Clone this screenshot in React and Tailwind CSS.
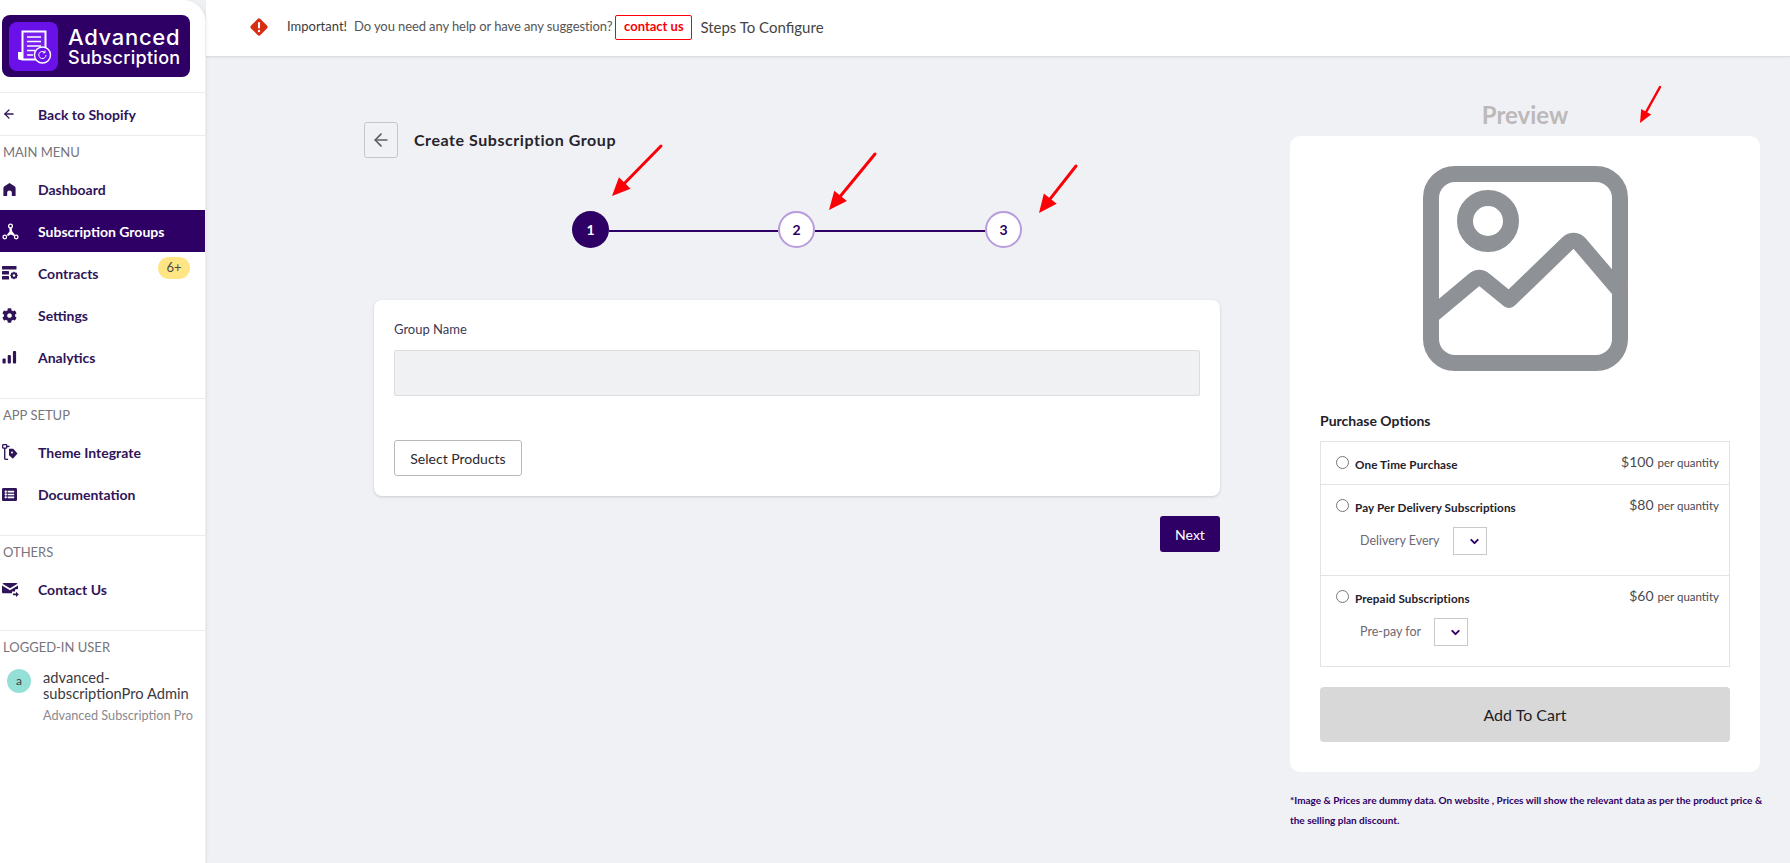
import React from 'react'
import { ArrowLeft, ChevronDown } from 'lucide-react'
import { FaCog, FaListAlt } from 'react-icons/fa'

const font = { fontFamily: 'Lato, "Open Sans", sans-serif' }

// ==================== ICONS ====================
const HomeIcon = () => (
  <svg width="15" height="15" viewBox="0 0 16 16" fill="currentColor">
    <path d="M8 1 2.600 4.600C1.900 5 1.500 5.800 1.500 6.600V15h4v-3.500a2.500 2.500 0 0 1 5 0V15h4V6.600c0-.8-.4-1.600-1.100-2z" />
  </svg>
)

const HubIcon = () => (
  <svg width="17" height="17" viewBox="0 0 17 17" fill="currentColor">
    <circle cx="8.500" cy="3" r="1.900" fill="none" stroke="currentColor" strokeWidth="1.300" />
    <circle cx="2.800" cy="14" r="1.800" fill="none" stroke="currentColor" strokeWidth="1.300" />
    <circle cx="14.200" cy="14" r="1.800" fill="none" stroke="currentColor" strokeWidth="1.300" />
    <path d="M7.500 5h2l.8 3.600 2.600 3.200-1 1.200-3-1.400-3 1.400-1-1.200 2.600-3.200z" />
  </svg>
)

const ContractsIcon = () => (
  <svg width="16" height="14" viewBox="0 0 16 14" fill="currentColor">
    <rect x="0" y="0" width="14.500" height="3.500" rx="0.600" />
    <rect x="0" y="5" width="7" height="3.500" rx="0.600" />
    <rect x="0" y="10" width="7" height="3.500" rx="0.600" />
    <circle cx="12" cy="9.500" r="2.300" fill="none" stroke="currentColor" strokeWidth="2" />
    <path d="M12 5.800v1.400M12 11.800v1.400M8.300 9.500h1.400M14.300 9.500h1.400M9.400 6.900l1 1M13.600 11.100l1 1M14.600 6.900l-1 1M10.400 11.100l-1 1" stroke="currentColor" strokeWidth="1.200" />
  </svg>
)

const AnalyticsIcon = () => (
  <svg width="15" height="13" viewBox="0 0 15 13" fill="currentColor">
    <rect x="0.500" y="7.500" width="3.200" height="5" rx="1" />
    <rect x="5.700" y="4" width="3.200" height="8.500" rx="1" />
    <rect x="10.900" y="0" width="3.200" height="12.500" rx="1" />
  </svg>
)

const ThemeIcon = () => (
  <svg width="16" height="17" viewBox="0 0 16 17" fill="currentColor">
    <rect x="0.700" y="0.700" width="4" height="3.400" rx="0.600" fill="none" stroke="currentColor" strokeWidth="1.300" />
    <path d="M2.700 4v10.200c0 .8.4 1.200 1.200 1.200h2.200" fill="none" stroke="currentColor" strokeWidth="1.400" />
    <path d="M4 2.400h3.500" fill="none" stroke="currentColor" strokeWidth="1.400" />
    <path d="M7 4.800h4.200l4.300 4.600-4.600 5.400-3.900-3.600z" />
    <circle cx="10" cy="8.400" r="1" fill="#fff" />
  </svg>
)

const MailIcon = () => (
  <svg width="17" height="15" viewBox="0 0 17 15" fill="currentColor">
    <path d="M0.500 1.800 8 6.300l7.500-4.500C15.300 1.200 14.800 1 14.200 1H1.800C1.200 1 .7 1.200.500 1.800z" />
    <path d="M0 3.400V10c0 .8.6 1.300 1.300 1.300H10V9.500h3V7.500l3-.4V3.400L8 8.200z" />
    <path d="M11 11.400h3V9.700l2.800 2.700-2.800 2.600v-1.800h-3z" />
  </svg>
)

const AlertIcon = () => (
  <svg width="20" height="20" viewBox="0 0 20 20">
    <rect x="3.400" y="3.400" width="13.200" height="13.200" rx="2" transform="rotate(45 10 10)" fill="#d92d12" />
    <rect x="9" y="5" width="2" height="6.500" rx="0.800" fill="#fff" />
    <circle cx="10" cy="14" r="1.200" fill="#fff" />
  </svg>
)

const LogoMark = () => (
  <svg width="36" height="36" viewBox="0 0 36 36" fill="none">
    <path d="M2 24h6v8H4c-1.200 0-2-.8-2-2z" fill="#fff" />
    <rect x="6.500" y="3.500" width="23" height="28" fill="#7a1ff0" stroke="#fff" strokeWidth="2" />
    <path d="M11 9h14M11 13.500h14M11 18h14M11 22.500h8M11 27h6" stroke="#fff" strokeWidth="1.600" />
    <circle cx="26.500" cy="27" r="8" fill="#6a10e8" stroke="#fff" strokeWidth="1.400" />
    <path d="M30 27a3.600 3.600 0 1 1-1.200-2.700M29 22.600v2.200h-2.200" stroke="#fff" strokeWidth="1" />
  </svg>
)

const PlaceholderImage = () => (
  <svg width="205" height="205" viewBox="0 0 205 205" fill="none" stroke="#8e9195" strokeWidth="16" strokeLinejoin="round">
    <rect x="8" y="8" width="189" height="189" rx="24" />
    <circle cx="65" cy="55" r="23" />
    <path d="M8 150 51 114c3.500-3 7-3 10.500 0L86 134l59-57c3.500-3 8.500-3 11.500.500L197 125" />
  </svg>
)

// ==================== ARROWS ====================
const RedArrow = ({ x1, y1, x2, y2, len = 20, width = 3 }) => {
  const angle = Math.atan2(y2 - y1, x2 - x1)
  const spread = 0.42
  const a = [x2 - len * Math.cos(angle - spread), y2 - len * Math.sin(angle - spread)]
  const b = [x2 - len * Math.cos(angle + spread), y2 - len * Math.sin(angle + spread)]
  return (
    <g>
      <line x1={x1} y1={y1} x2={x2 - 12 * Math.cos(angle)} y2={y2 - 12 * Math.sin(angle)} stroke="#fb0007" strokeWidth={width} strokeLinecap="round" />
      <polygon points={`${x2},${y2} ${a[0]},${a[1]} ${b[0]},${b[1]}`} fill="#fb0007" />
    </g>
  )
}

// ==================== SIDEBAR ====================
const NavItem = ({ icon, label, active, badge }) => (
  <div className={`relative h-[42px] flex items-center text-[14px] font-bold ${active ? 'bg-[#2e0065] text-white' : 'text-[#2f1459]'}`}>
    <span className="w-[38px] pl-[2px] flex items-center shrink-0">{icon}</span>
    <span>{label}</span>
    {badge && (
      <span className="absolute right-[15px] top-[5px] w-[32px] h-[22px] rounded-full bg-[#ffe583] text-[#4a4a4a] text-[13px] font-normal flex items-center justify-center">
        {badge}
      </span>
    )}
  </div>
)

const SectionLabel = ({ children }) => (
  <div className="h-[32px] pl-[3px] pt-[2px] flex items-center text-[13px] text-[#77747c]">{children}</div>
)

const Sidebar = () => (
  <aside className="w-[206px] shrink-0 bg-white rounded-tr-[22px] border-r border-[#eceef2] shadow-[1px_0_3px_rgba(0,0,0,0.06)] z-10 flex flex-col">
    <div className="h-[93px] pt-[15px] pl-[2px] border-b border-[#ebebeb]">
      <div className="w-[188px] h-[62px] bg-[#2e0065] rounded-[8px] flex items-center pl-[7px]">
        <div className="w-[49px] h-[49px] rounded-[8px] bg-[#6a10e8] flex items-center justify-center shrink-0">
          <LogoMark />
        </div>
        <div className="ml-[10px] text-white leading-none" style={{ fontFamily: 'Inter, sans-serif' }}>
          <div className="text-[22px] font-medium tracking-[0.7px]">Advanced</div>
          <div className="text-[18px] font-medium tracking-[0.3px] mt-[1px]">Subscription</div>
        </div>
      </div>
    </div>
    <div className="h-[43px] flex items-center border-b border-[#ebebeb] text-[14px] font-bold text-[#2f1459]">
      <span className="w-[38px] pl-[2px] shrink-0"><ArrowLeft size={14} strokeWidth={2.2} /></span>
      <span>Back to Shopify</span>
    </div>
    <SectionLabel>MAIN MENU</SectionLabel>
    <div>
      <NavItem icon={<HomeIcon />} label="Dashboard" />
      <NavItem icon={<HubIcon />} label="Subscription Groups" active />
      <NavItem icon={<ContractsIcon />} label="Contracts" badge="6+" />
      <NavItem icon={<FaCog size={15} />} label="Settings" />
      <NavItem icon={<AnalyticsIcon />} label="Analytics" />
    </div>
    <div className="mt-[20px] border-t border-[#ebebeb]">
      <SectionLabel>APP SETUP</SectionLabel>
      <div>
        <NavItem icon={<ThemeIcon />} label="Theme Integrate" />
        <NavItem icon={<FaListAlt size={15} />} label="Documentation" />
      </div>
    </div>
    <div className="mt-[20px] border-t border-[#ebebeb]">
      <SectionLabel>OTHERS</SectionLabel>
      <div>
        <NavItem icon={<MailIcon />} label="Contact Us" />
      </div>
    </div>
    <div className="mt-[20px] border-t border-[#ebebeb]">
      <SectionLabel>LOGGED-IN USER</SectionLabel>
      <div className="flex pl-[7px] pt-[6px]">
        <div className="w-[24px] h-[24px] rounded-full bg-[#94e0d6] text-[#3c3c3c] text-[12px] flex items-center justify-center shrink-0">a</div>
        <div className="ml-[12px]">
          <div className="text-[14.7px] leading-[16px] text-[#3d3a42]">advanced-<br />subscriptionPro Admin</div>
          <div className="text-[12.7px] mt-[5px] text-[#8b8990] whitespace-nowrap">Advanced Subscription Pro</div>
        </div>
      </div>
    </div>
  </aside>
)

// ==================== HEADER ====================
const Header = () => (
  <header className="h-[57px] shrink-0 pb-[2px] bg-white border-b border-[#dcdde1] shadow-[0_1px_2px_rgba(0,0,0,0.05)] flex items-center pl-[43px]">
    <AlertIcon />
    <span className="ml-[18px] text-[13px] text-[#3c3c3c]">Important!</span>
    <span className="ml-[7px] text-[13px] tracking-[-0.1px] text-[#555]">Do you need any help or have any suggestion?</span>
    <span className="ml-[3px] h-[25px] w-[77px] border border-[#fb0007] rounded-[2px] text-[#fb0007] text-[13px] font-bold flex items-center justify-center">contact us</span>
    <span className="ml-[8px] text-[15px] text-[#444]">Steps To Configure</span>
  </header>
)

// ==================== WIZARD ====================
const Step = ({ n, active }) => (
  <div className={`w-[37px] h-[37px] rounded-full flex items-center justify-center text-[14px] font-bold shrink-0 ${active ? 'bg-[#2e0065] text-white' : 'bg-white text-[#2e0065] border-2 border-[#b79bdc]'}`}>
    {n}
  </div>
)

const Wizard = () => (
  <div className="w-[856px]">
    <div className="flex items-center">
      <button className="w-[34px] h-[36px] rounded-[3px] border border-[#c6c6c9] flex items-center justify-center text-[#5f5f63]">
        <ArrowLeft size={20} />
      </button>
      <h1 className="ml-[16px] text-[16px] tracking-[0.55px] font-bold text-[#26232c]">Create Subscription Group</h1>
    </div>
    <div className="flex items-center pl-[208px] mt-[53px]">
      <Step n="1" active />
      <div className="h-[2px] w-[169px] bg-[#2e0065] mt-[3px]" />
      <Step n="2" />
      <div className="h-[2px] w-[170px] bg-[#2e0065] mt-[3px]" />
      <Step n="3" />
    </div>
    <div className="mt-[52px] ml-[10px] w-[846px] bg-white rounded-[8px] shadow-[0_1px_3px_rgba(0,0,0,0.16)] px-[20px] pt-[20px] pb-[20px]">
      <label className="block text-[13px] leading-[18px] text-[#3d3a55]">Group Name</label>
      <input className="block mt-[12px] w-full h-[46px] bg-[#f0f1f3] border border-[#dcdde0] rounded-[2px]" />
      <button className="block mt-[44px] w-[128px] h-[36px] bg-white border border-[#b9b9bd] rounded-[3px] text-[14px] text-[#2a2a2e]">Select Products</button>
    </div>
    <div className="flex justify-end mt-[20px]">
      <button className="w-[60px] h-[36px] bg-[#2e0065] rounded-[3px] text-white text-[14px]">Next</button>
    </div>
  </div>
)

// ==================== PREVIEW ====================
const Dropdown = () => (
  <div className="relative w-[34px] h-[28px] border border-[#c9c9c9] bg-white">
    <select className="w-full h-full appearance-none bg-transparent" />
    <ChevronDown size={13} strokeWidth={3.5} className="absolute right-[5px] top-[7px] text-[#2e0065] pointer-events-none" />
  </div>
)

const PurchaseRow = ({ label, price, sub, height, last }) => (
  <div className={`px-[15px] pt-[11px] ${last ? '' : 'border-b border-[#e3e3e3]'}`} style={{ height }}>
    <div className="flex items-start">
      <input type="radio" className="w-[13px] h-[13px] mt-[3px] m-0" />
      <span className="ml-[6px] mt-[3px] text-[11.7px] tracking-[0.1px] leading-[16px] font-bold text-[#23212a]">{label}</span>
      <span className="ml-auto mr-[-5px] flex items-baseline text-[#4a4a50]">
        <span className="text-[14px] leading-[18px]">{price}</span>
        <span className="ml-[4px] text-[11.5px]">per quantity</span>
      </span>
    </div>
    {sub && (
      <div className="flex items-center mt-[12px] ml-[24px]">
        <span className="text-[12.5px] text-[#6d6874]">{sub}</span>
        <span className="ml-[13px]"><Dropdown /></span>
      </div>
    )}
  </div>
)

const Preview = () => (
  <div className="w-[470px]">
    <div className="h-[28px] flex items-center justify-center text-[24px] font-bold text-[#bdb9ba]">Preview</div>
    <div className="mt-[7px] h-[636px] bg-white rounded-[10px] pt-[30px] px-[30px]">
      <div className="flex justify-center"><PlaceholderImage /></div>
      <div className="mt-[41px] text-[14px] leading-[18px] font-bold text-[#23212a]">Purchase Options</div>
      <div className="mt-[11px] border border-[#e3e3e3]">
        <PurchaseRow label="One Time Purchase" price="$100" height={43} />
        <PurchaseRow label="Pay Per Delivery Subscriptions" price="$80" sub="Delivery Every" height={91} />
        <PurchaseRow label="Prepaid Subscriptions" price="$60" sub="Pre-pay for" height={90} last />
      </div>
      <button className="mt-[20px] w-full h-[55px] rounded-[4px] bg-[#d8d8d8] text-[16px] text-[#1e1e24]">Add To Cart</button>
    </div>
    <p className="mt-[18px] text-[10px] leading-[20px] font-bold text-[#2e0065] whitespace-nowrap">
      *Image &amp; Prices are dummy data. On website , Prices will show the relevant data as per the product price &amp;<br />the selling plan discount.
    </p>
  </div>
)

// ==================== APP ====================
export default function App() {
  return (
    <div style={font} className="relative w-[1790px] h-[863px] overflow-hidden flex bg-[#f0f1f5]">
      <Sidebar />
      <div className="flex-1 flex flex-col">
        <Header />
        <main className="flex pl-[158px] pt-[45px]">
          <div className="pt-[20px]"><Wizard /></div>
          <div className="ml-[70px] -mt-[1px]"><Preview /></div>
        </main>
      </div>
      {/* annotation arrows drawn over the page */}
      <svg className="absolute inset-0 pointer-events-none z-20" width="1790" height="863">
        <RedArrow x1={661} y1={146} x2={612} y2={196} />
        <RedArrow x1={875} y1={154} x2={829} y2={210} />
        <RedArrow x1={1076} y1={166} x2={1039} y2={213} />
        <RedArrow x1={1660} y1={87} x2={1640} y2={123} len={14} width={2.5} />
      </svg>
    </div>
  )
}
